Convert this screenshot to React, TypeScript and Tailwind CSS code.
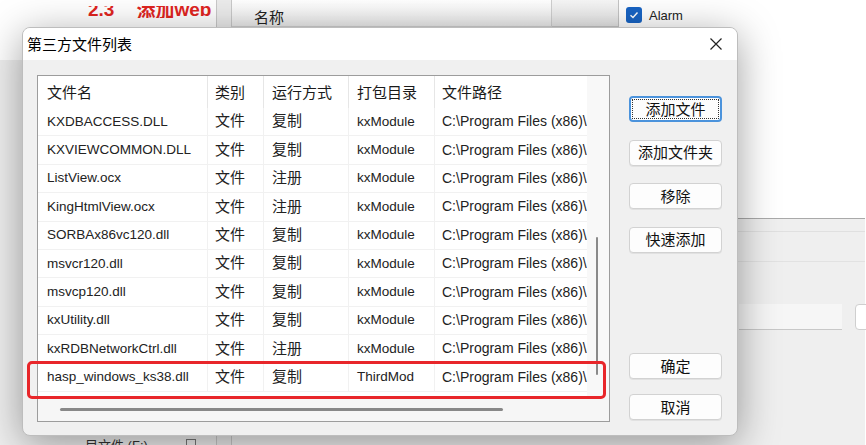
import React from "react";

const rows: [string, string, string, string][] = [
  ["KXDBACCESS.DLL", "文件", "复制", "kxModule"],
  ["KXVIEWCOMMON.DLL", "文件", "复制", "kxModule"],
  ["ListView.ocx", "文件", "注册", "kxModule"],
  ["KingHtmlView.ocx", "文件", "注册", "kxModule"],
  ["SORBAx86vc120.dll", "文件", "复制", "kxModule"],
  ["msvcr120.dll", "文件", "复制", "kxModule"],
  ["msvcp120.dll", "文件", "复制", "kxModule"],
  ["kxUtility.dll", "文件", "复制", "kxModule"],
  ["kxRDBNetworkCtrl.dll", "文件", "注册", "kxModule"],
  ["hasp_windows_ks38.dll", "文件", "复制", "ThirdMod"],
];

function Btn({ label, focused }: { label: string; focused?: boolean }) {
  if (focused) {
    return (
      <div className="h-[26px] w-[93px] shrink-0 rounded-[4px] border-2 border-[#4b93dc] bg-[#fdfdfd] p-[1px]">
        <div className="flex h-full w-full items-center justify-center border border-dotted border-[#333] text-[15px] leading-none text-[#111]">
          {label}
        </div>
      </div>
    );
  }
  return (
    <div className="flex h-[26px] w-[93px] shrink-0 items-center justify-center rounded-[4px] border border-[#d2d2d2] bg-[#fdfdfd] text-[15px] leading-none text-[#111] shadow-[0_1px_0_rgba(0,0,0,0.06)]">
      {label}
    </div>
  );
}

export default function App() {
  return (
    <div className="relative h-[445px] w-[866px] overflow-hidden bg-white font-['Liberation_Sans','Noto_Sans_CJK_SC',sans-serif] text-[#1a1a1a]">
      {/* background application */}
      <div className="flex h-full w-[866px]">
        {/* left column */}
        <div className="flex w-[217px] shrink-0 flex-col border-r border-[#c9c9c9]">
          <div className="h-[60px] shrink-0 bg-white">
            <div className="mt-[6px] h-[12px] overflow-hidden">
              <div className="-mt-[6px] flex whitespace-nowrap pl-[88px] text-[19px] font-bold leading-[19px] text-[#e0251f]">
                <span>2.3</span>
                <span className="ml-[22px] font-['Noto_Sans_CJK_SC',sans-serif]">添加</span>
                <span>web</span>
              </div>
            </div>
          </div>
          <div className="flex flex-1 flex-col justify-end bg-[#efefef]">
            <div className="flex h-[9px] items-start whitespace-nowrap pl-[85px] text-[13px] leading-none text-[#333]">
              <span className="mt-[3px]">目文件 (F:)</span>
              <span className="ml-[38px] mt-[3px] h-[10px] w-[10px] border border-[#777]" />
            </div>
          </div>
        </div>
        {/* thin gutter */}
        <div className="w-[15px] shrink-0 border-r border-[#c9c9c9] bg-[#ececec]" />
        {/* main column */}
        <div className="flex w-[633px] shrink-0 flex-col">
          <div className="flex h-[27px] shrink-0">
            <div className="flex w-[320px] shrink-0 items-start border-b border-r border-[#cfcfcf] bg-gradient-to-b from-white to-[#ececec] pl-[22px] pt-[10px] text-[15px] leading-none text-[#222]">
              名称
            </div>
            <div className="w-[67px] shrink-0 border-b border-r border-[#c4c4c4] bg-gradient-to-b from-[#f6f6f6] to-[#e6e6e6]" />
            <div className="flex flex-1 items-start bg-white pl-[7px] pt-[7px]">
              <div className="flex h-[16px] w-[16px] shrink-0 items-center justify-center rounded-[3px] bg-[#1864c4]">
                <svg width="10" height="10" viewBox="0 0 10 10">
                  <path d="M1.5 5.2 L4 7.5 L8.5 2.5" stroke="white" strokeWidth="1.4" fill="none" />
                </svg>
              </div>
              <span className="ml-[7px] mt-[2px] text-[13px] leading-none text-[#222]">Alarm</span>
            </div>
          </div>
          <div className="h-[191px] shrink-0 bg-white" />
          <div className="flex flex-1 flex-col border-t border-[#a9a9a9] bg-[#efefef]">
            <div className="h-[13px] shrink-0 border-b border-[#e0e0e0]" />
            <div className="h-[30px] shrink-0 border-b border-[#e2e2e2]" />
            <div className="flex pl-[507px] pt-[42px]">
              <div className="h-[26px] w-[103px] shrink-0 border-b border-[#c8c8c8] bg-[#f6f6f6]" />
              <div className="ml-[13px] h-[26px] w-[40px] shrink-0 rounded-[4px] border border-[#cfcfcf] bg-white" />
            </div>
          </div>
        </div>
      </div>

      {/* dialog window */}
      <div className="absolute left-[22px] top-[27px] flex h-[409px] w-[716px] flex-col overflow-hidden rounded-[8px] border border-[#bdbdbd] bg-[#f0f0f0] shadow-[0_8px_40px_rgba(0,0,0,0.38)]">
        <div className="flex h-[32px] shrink-0 items-center justify-between bg-white pl-[4px] pr-[15px]">
          <span className="text-[15px] leading-none text-black">第三方文件列表</span>
          <svg width="12" height="12" viewBox="0 0 12 12">
            <path d="M0.5 0.5 L11.5 11.5 M11.5 0.5 L0.5 11.5" stroke="#222" strokeWidth="1.2" />
          </svg>
        </div>
        <div className="flex flex-1 pl-[14px] pt-[15px]">
          {/* list view */}
          <div className="flex h-[347px] w-[573px] shrink-0 flex-col border border-[#9c9c9c] bg-white">
            <div className="flex flex-1">
              <div className="flex w-[549px] shrink-0 flex-col overflow-hidden">
                <div className="grid h-[32px] shrink-0 grid-cols-[170px_56px_85px_86px_152px] text-[15px] leading-none text-[#1a1a1a]">
                  <div className="flex items-center border-r border-[#e6e6e6] pl-[9px]">文件名</div>
                  <div className="flex items-center border-r border-[#e6e6e6] pl-[7px]">类别</div>
                  <div className="flex items-center border-r border-[#e6e6e6] pl-[8px]">运行方式</div>
                  <div className="flex items-center border-r border-[#e6e6e6] pl-[8px]">打包目录</div>
                  <div className="flex items-center pl-[7px]">文件路径</div>
                </div>
                {rows.map((r, i) => (
                  <div
                    key={i}
                    className="grid h-[28.4px] shrink-0 grid-cols-[170px_56px_85px_86px_152px] border-b border-[#f1f1f1] text-[#222]"
                  >
                    <div className="flex items-center overflow-hidden whitespace-nowrap border-r border-[#f1f1f1] pl-[9px] text-[13.5px]">{r[0]}</div>
                    <div className="flex items-center border-r border-[#f1f1f1] pl-[7px] text-[15px]">{r[1]}</div>
                    <div className="flex items-center border-r border-[#f1f1f1] pl-[8px] text-[15px]">{r[2]}</div>
                    <div className="flex items-center border-r border-[#f1f1f1] pl-[8px] text-[13.5px]">{r[3]}</div>
                    <div className="flex items-center overflow-hidden whitespace-nowrap pl-[7px] text-[14px]">
                      C:\Program Files (x86)\KingSCADA3.8\Bin
                    </div>
                  </div>
                ))}
              </div>
              <div className="w-[22px] shrink-0 bg-[#f8f8f8]">
                <div className="ml-[9px] mt-[161px] h-[138px] w-[2px] rounded-full bg-[#8a8a8a]" />
              </div>
            </div>
            <div className="h-[23px] shrink-0 bg-[#f6f6f6] pl-[22px] pt-[10px]">
              <div className="h-[3px] w-[443px] rounded-full bg-[#888]" />
            </div>
          </div>
          {/* buttons */}
          <div className="ml-[19px] flex w-[93px] shrink-0 flex-col pb-[15px] pt-[21px]">
            <div className="flex flex-col gap-[17.5px]">
              <Btn label="添加文件" focused />
              <Btn label="添加文件夹" />
              <Btn label="移除" />
              <Btn label="快速添加" />
            </div>
            <div className="mt-auto flex flex-col gap-[15px]">
              <Btn label="确定" />
              <Btn label="取消" />
            </div>
          </div>
        </div>
      </div>

      {/* red highlight annotation */}
      <div className="absolute left-[27px] top-[361px] h-[38px] w-[579px] rounded-[5px] border-[3px] border-[#e8262a]" />
    </div>
  );
}
